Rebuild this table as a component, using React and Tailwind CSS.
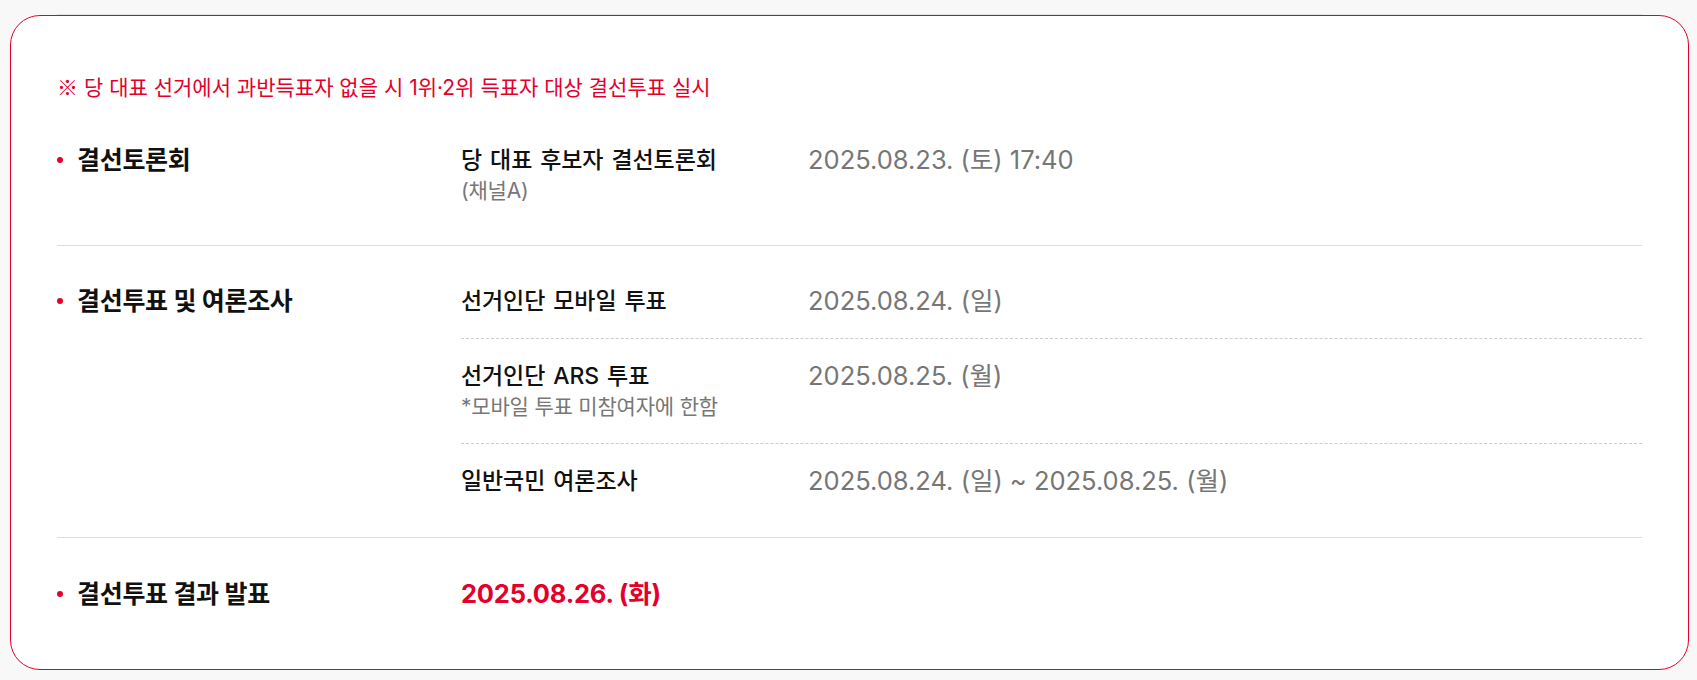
import React from "react";

const font = { fontFamily: "Inter, 'Noto Sans CJK KR', sans-serif" };
const cjk = { fontFamily: "'Noto Sans CJK KR', sans-serif" };

const rows = [
  {
    label: "결선토론회",
    pad: "pt-[17px] pb-[18px]",
    items: [
      {
        name: "당 대표 후보자 결선토론회",
        sub: "(채널A)",
        date: "2025.08.23. (토) 17:40",
      },
    ],
  },
  {
    label: "결선투표 및 여론조사",
    pad: "pt-[18px] pb-[19px]",
    items: [
      { name: "선거인단 모바일 투표", date: "2025.08.24. (일)" },
      {
        name: "선거인단 ARS 투표",
        sub: "*모바일 투표 미참여자에 한함",
        date: "2025.08.25. (월)",
      },
      { name: "일반국민 여론조사", date: "2025.08.24. (일) ~ 2025.08.25. (월)" },
    ],
  },
];

const Label = ({ children }) => (
  <div className="flex h-[32px] w-[404px] shrink-0 items-center gap-[14px]">
    <span className="h-[6px] w-[6px] rounded-full bg-[#e4002b]" />
    <span className="text-[25px] font-bold leading-[32px] tracking-[-0.3px] text-[#111]">
      {children}
    </span>
  </div>
);

export default function App() {
  return (
    <div className="min-h-[680px] bg-[#f8f8f8] pt-[14px] pb-[11px]" style={font}>
      <div className="ml-[57px] mr-[55px] h-px bg-[#e2e2e2]" />
      <div className="ml-[10px] mr-[8px] rounded-[30px] border border-[#e4002b] bg-white px-[46px] pt-[55px] pb-[19px]">
        <p className="mb-[3px] text-[21px] leading-[30px] text-[#e4002b]">
          <span style={cjk}>※</span> 당 대표 선거에서 과반득표자 없을 시 1위·2위 득표자 대상 결선투표 실시
        </p>

        {rows.map((row) => (
          <div
            key={row.label}
            className={"flex border-b border-[#dddddd] " + row.pad}
          >
            <div className="pt-[21px]">
              <Label>{row.label}</Label>
            </div>
            <div className="flex-1">
              {row.items.map((item, i) => (
                <div
                  key={item.name}
                  className={
                    "flex py-[21px] " +
                    (i < row.items.length - 1
                      ? "border-b border-dashed border-[#cccccc]"
                      : "")
                  }
                >
                  <div className="w-[347px] shrink-0">
                    <div className="text-[23px] font-medium leading-[32px] tracking-[-0.1px] text-[#111] [word-spacing:2px]">
                      {item.name}
                    </div>
                    {item.sub && (
                      <div className="text-[21px] leading-[30px] tracking-[-0.2px] text-[#777]">
                        {item.sub}
                      </div>
                    )}
                  </div>
                  <div className="text-[25.5px] leading-[32px] text-[#767676]">
                    {item.date}
                  </div>
                </div>
              ))}
            </div>
          </div>
        ))}

        <div className="flex pt-[40px] pb-[40px]">
          <Label>결선투표 결과 발표</Label>
          <div className="text-[25.5px] font-bold leading-[32px] tracking-[-0.2px] text-[#e4002b]">
            2025.08.26. (화)
          </div>
        </div>
      </div>
    </div>
  );
}
